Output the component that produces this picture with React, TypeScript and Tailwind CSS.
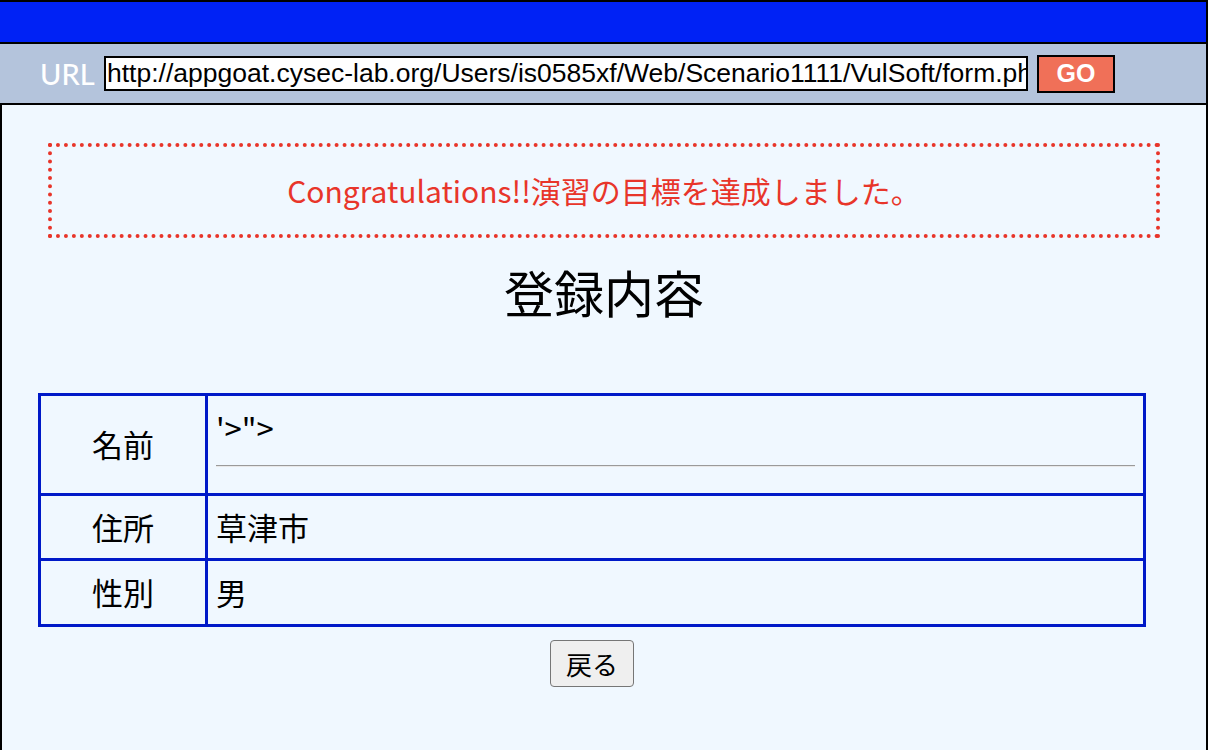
import React from 'react';

export default function App() {
  return (
    <div className="w-[1208px] h-[750px] overflow-hidden bg-[#f0f8ff] font-['Noto_Sans_CJK_JP','Noto_Sans',sans-serif] text-black">
      {/* Top bar */}
      <div className="h-[44px] bg-[#0022f5] border-t-2 border-b-2 border-r-2 border-black" />

      {/* URL bar */}
      <div className="h-[61px] bg-[#b4c4dc] border-b-2 border-r-2 border-black flex items-center">
        <span className="ml-[40px] w-[56px] text-[29px] leading-none text-white font-medium font-['Lato','Noto_Sans',sans-serif]">URL</span>
        <div className="ml-[8px] w-[924px] h-[35px] bg-white border-2 border-black overflow-hidden whitespace-nowrap flex items-center pl-[1px] font-['Liberation_Sans',Arial,sans-serif] text-[26.5px] leading-none">
          http://appgoat.cysec-lab.org/Users/is0585xf/Web/Scenario1111/VulSoft/form.php
        </div>
        <button className="ml-[9px] w-[78px] h-[38px] bg-[#f07058] border-2 border-black text-white font-bold text-[25px] leading-none font-['Liberation_Sans',Arial,sans-serif]">
          GO
        </button>
      </div>

      {/* Content */}
      <div className="h-[645px] border-x-2 border-black pt-[38px]">
        <div className="mx-[46px] h-[95px] border-[4px] border-dotted border-[#e8352a] flex items-center justify-center text-[#e8352a] text-[30px]">
          Congratulations!!演習の目標を達成しました。
        </div>

        <h1 className="mt-[28px] text-center text-[50px] leading-none font-normal">登録内容</h1>

        <div className="ml-[36px] w-[1108px] mt-[77px]">
          <table className="w-full border-collapse border-[3px] border-[#0019c8] text-[31px]">
            <tbody>
              <tr className="h-[100px]">
                <td className="w-[167px] border-[3px] border-[#0019c8] text-center">名前</td>
                <td className="border-[3px] border-[#0019c8] px-[8px] align-top pt-[14px]">
                  <div className="leading-[36px]">'&gt;"&gt;</div>
                  <div className="mt-[19px] h-[2px] bg-[#9a9a9a] border-b border-[#e8e8e8]" />
                </td>
              </tr>
              <tr className="h-[65px]">
                <td className="border-[3px] border-[#0019c8] text-center">住所</td>
                <td className="border-[3px] border-[#0019c8] px-[8px]">草津市</td>
              </tr>
              <tr className="h-[66px]">
                <td className="border-[3px] border-[#0019c8] text-center">性別</td>
                <td className="border-[3px] border-[#0019c8] px-[8px]">男</td>
              </tr>
            </tbody>
          </table>
          <div className="flex justify-center mt-[13px]">
            <button className="w-[84px] h-[47px] bg-[#efefef] border border-[#767676] rounded-[4px] text-[26px] leading-none">
              戻る
            </button>
          </div>
        </div>
      </div>
    </div>
  );
}
